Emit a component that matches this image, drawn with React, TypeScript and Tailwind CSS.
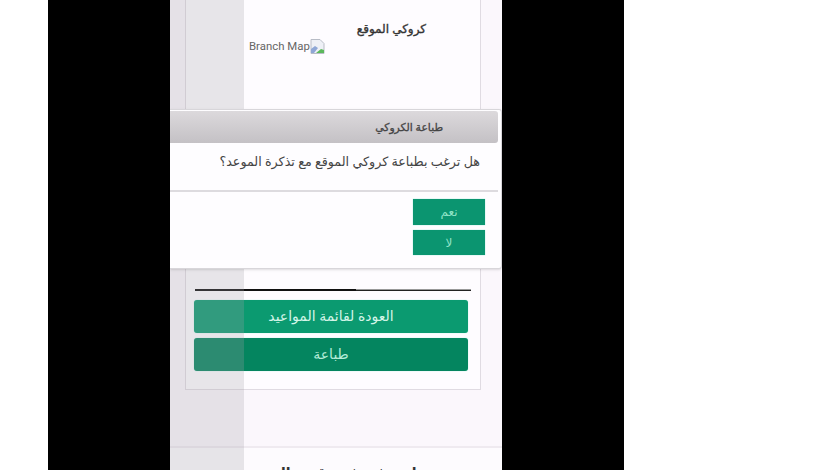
const arabic = "font-['Noto_Sans','DejaVu_Sans',sans-serif]";

function DialogButton({ label, short }: { label: string; short?: boolean }) {
  return (
    <button
      className={
        short
          ? "flex h-[25px] w-[72px] items-center justify-center bg-[#0b9570] text-xs text-[#8fe3c6] shadow-[0_0_1px_#7fe8cc]"
          : "flex h-[26px] w-[72px] items-center justify-center bg-[#0b9570] text-xs text-[#8fe3c6] shadow-[0_0_1px_#7fe8cc]"
      }
    >
      {label}
    </button>
  );
}

function ActionButton({ label, dark }: { label: string; dark?: boolean }) {
  return (
    <button
      className={
        dark
          ? "flex h-[33px] w-[274px] items-center justify-center rounded-[3px] bg-[#04855f] pb-[2px] text-sm text-[#b5ecd8] shadow-[0_0_1px_#7fe8cc]"
          : "flex h-[33px] w-[274px] items-center justify-center rounded-[3px] bg-[#0b9a70] pb-[2px] text-sm text-[#d4f5e8] shadow-[0_0_1px_#7fe8cc]"
      }
    >
      {label}
    </button>
  );
}

function BrokenImage() {
  return (
    <svg width="15" height="15" viewBox="0 0 15 15" className="shrink-0">
      <path d="M1 0.5h9l4 4v10H1z" fill="#eef0f6" stroke="#b8bcc6" strokeWidth="1" />
      <path d="M1 14v-4l4-3 3 2-4 5z" fill="#8fa7d6" />
      <path d="M6 14l5-4 3 1v3z" fill="#5cb85c" />
    </svg>
  );
}

export default function App() {
  return (
    <div dir="ltr" className={`flex h-[470px] w-[824px] overflow-hidden bg-white ${arabic}`}>
      <div className="ml-[48px] flex h-full w-[576px] bg-black pl-[122px]">
        <div className="relative h-full w-[332px] overflow-hidden bg-[#fbf7fc]">
          {/* page behind the dialog */}
          <div className="flex h-full flex-col">
            <div className="ml-[15px] mr-[21px] flex h-[390px] shrink-0 flex-col border-x border-b border-[#e0dbe2] bg-[#fefcff]">
              <div className="flex h-[289px] shrink-0 flex-col">
                <p dir="rtl" className="mt-[21px] pr-[54px] text-xs text-[#333] [-webkit-text-stroke:0.35px_#333]">
                  كروكي الموقع
                </p>
                <div className="mt-[1px] flex items-center pl-[63px] font-['Roboto',sans-serif] text-[11.4px] text-[#666]">
                  <span>Branch Map</span>
                  <BrokenImage />
                </div>
              </div>
              <div className="mx-[9px] flex h-[2px]">
                <div className="h-full w-[161px] bg-[#111]" />
                <div className="h-full flex-1 border-t border-[#999] bg-[#222]" />
              </div>
              <div className="mt-[9px] flex flex-col gap-[5px] pl-[8px]">
                <ActionButton label="العودة لقائمة المواعيد" />
                <ActionButton label="طباعة" dark />
              </div>
            </div>
            <div className="mt-[56px] flex-1 border-t-2 border-[#efeaf0] bg-[#fdfbfe]">
              <p dir="rtl" className="mt-[15px] text-center text-sm font-semibold text-[#333]">
                هل ترغب في تقييم الخدمة
              </p>
            </div>
          </div>

          {/* left tinted strip */}
          <div className="absolute inset-y-0 left-0 w-[74px] bg-[#a3a0a6]/25" />

          {/* print dialog */}
          <div className="absolute left-0 top-[109px] flex h-[160px] w-[332px] flex-col rounded-r-[3px] border-y border-r border-[#d8d6da] bg-[#fefdff] shadow-sm">
            <div className="mr-[3px] mt-[1px] flex h-[32px] items-center justify-end rounded-r-[3px] bg-gradient-to-b from-[#dcd9dc] to-[#c4c1c5] pr-[55px] pt-[1px]">
              <span dir="rtl" className="text-[10.8px] text-[#444] [-webkit-text-stroke:0.3px_#444]">
                طباعة الكروكي
              </span>
            </div>
            <div className="mr-[3px] flex h-[49px] items-start justify-end border-b-2 border-[#dddbdf] pr-[18px] pt-[9px]">
              <p dir="rtl" className="text-[12.7px] text-[#444]">
                هل ترغب بطباعة كروكي الموقع مع تذكرة الموعد؟
              </p>
            </div>
            <div className="flex flex-col items-end gap-[5px] pr-[16px] pt-[7px]">
              <DialogButton label="نعم" />
              <DialogButton label="لا" short />
            </div>
          </div>
        </div>
      </div>
    </div>
  );
}
